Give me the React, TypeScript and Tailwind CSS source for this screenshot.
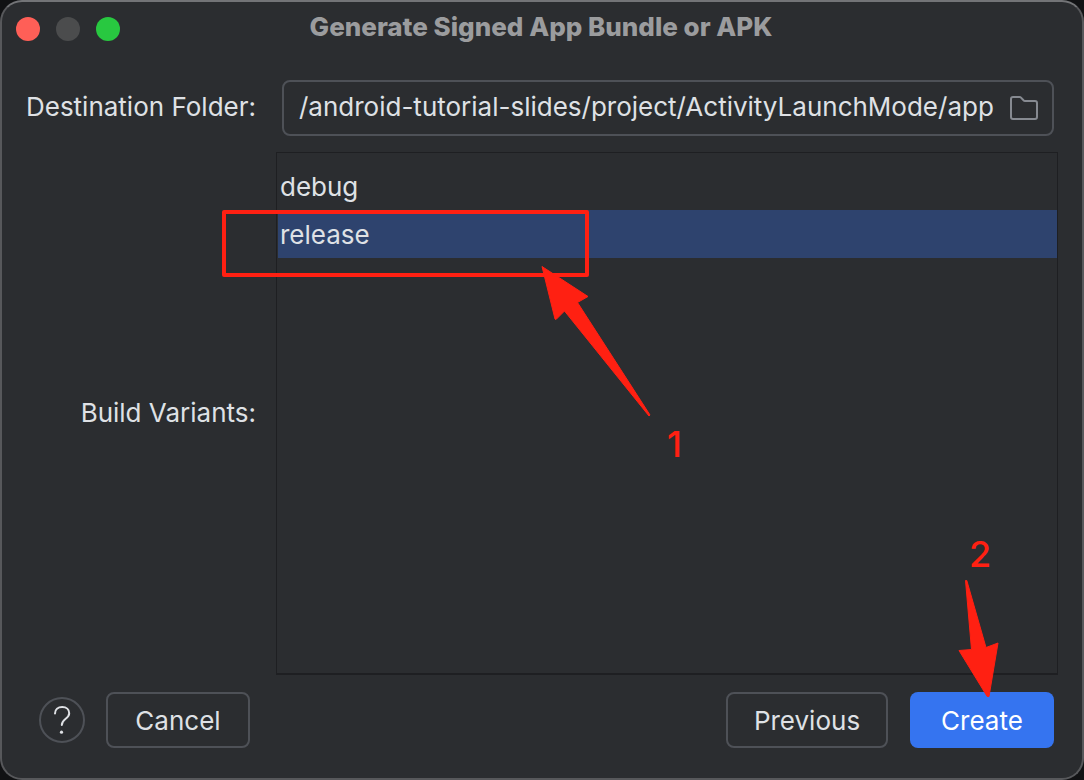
import { useState } from "react";

const VARIANTS = ["debug", "release"];

function TrafficLights() {
  return (
    <div className="flex gap-4">
      <button type="button" aria-label="Close" className="size-6 rounded-full bg-[#ff5f57]" />
      <button type="button" aria-label="Minimize" disabled className="size-6 rounded-full bg-[#4b4c4d]" />
      <button type="button" aria-label="Zoom" className="size-6 rounded-full bg-[#28c840]" />
    </div>
  );
}

function FolderIcon() {
  return (
    <svg width="32" height="32" viewBox="0 0 32 32" fill="none" stroke="#868a91" strokeWidth="2" strokeLinejoin="round">
      <path d="M3 7a2 2 0 0 1 2-2h6.600a2 2 0 0 1 1.400.6L15.500 8.300a2 2 0 0 0 1.500.7H27a2 2 0 0 1 2 2v14a2 2 0 0 1-2 2H5a2 2 0 0 1-2-2z" />
    </svg>
  );
}

function HelpIcon() {
  return (
    <svg width="24" height="32" viewBox="0 0 24 32" fill="none" stroke="#dfe1e5" strokeWidth="2" strokeLinecap="round">
      <path d="M5 9.500C5 5.500 8 3 12.200 3s7 2.600 7 6.200c0 5.800-7.400 5.300-7.400 11.800" />
      <circle cx="11.500" cy="28.200" r="1.600" fill="#dfe1e5" stroke="none" />
    </svg>
  );
}

function SelectArrow() {
  return (
    <svg className="pointer-events-none absolute left-[263px] top-[111px]" width="112" height="154" viewBox="540 264 112 154" fill="#ff2012" stroke="#ff2012" strokeLinejoin="round">
      <path d="M542 266.500L588 296.500L577.500 302.500L650 415L649 416L564.500 311L556 319.500L555 319Z" />
    </svg>
  );
}

function CreateArrow() {
  return (
    <svg className="pointer-events-none absolute -top-[114px] left-[46px]" width="44" height="122" viewBox="956 578 44 122" fill="#ff2012" stroke="#ff2012" strokeLinejoin="round">
      <path d="M965.500 580.500L966.800 580.500L986 647.500L998 643L989 696.500L987.200 696.500L959 650.500L971.500 649.500Z" />
    </svg>
  );
}

export default function App() {
  const [folder, setFolder] = useState("/android-tutorial-slides/project/ActivityLaunchMode/app");
  const [variant, setVariant] = useState(["release"]);

  return (
    <div className="min-h-screen bg-[#111214] flex font-['Inter',sans-serif] text-[26px] leading-8 text-[#dfe1e5]">
      <main className="flex flex-1 flex-col rounded-[22px] border-2 border-[#57585b] border-t-[#737477] bg-[#2b2d30] pb-[30px]">
        <header className="grid grid-cols-[1fr_auto_1fr] items-center pl-3.5 pr-4 pt-[9px]">
          <div className="pt-0.5">
            <TrafficLights />
          </div>
          <h1 className="pb-px font-extrabold text-[#9b9c9e]">Generate Signed App Bundle or APK</h1>
        </header>

        <form className="flex flex-1 flex-col pt-9" onSubmit={(e) => e.preventDefault()}>
          <div className="grid flex-1 grid-cols-[254px_1fr] grid-rows-[auto_1fr] gap-y-4 pr-6">
            <label htmlFor="folder" className="self-center pb-0.5 text-right">
              Destination Folder:
            </label>
            <div className="ml-[26px] mr-1 flex h-14 items-center gap-3 rounded-lg border-2 border-[#4e5157] pl-[15px] pr-3">
              <input
                id="folder"
                className="min-w-0 flex-1 bg-transparent pb-0.5 outline-none"
                value={folder}
                onChange={(e) => setFolder(e.target.value)}
              />
              <button type="button" aria-label="Browse">
                <FolderIcon />
              </button>
            </div>

            <label htmlFor="variants" className="self-center pb-0.5 text-right">
              Build Variants:
            </label>
            <div className="relative ml-5 flex border border-b-2 border-[#1e1f22] pl-px">
              <select
                id="variants"
                multiple
                className="w-full appearance-none overflow-hidden bg-transparent pt-[9px] outline-none"
                value={variant}
                onChange={(e) => setVariant([e.target.value])}
              >
                {VARIANTS.map((name) => (
                  <option
                    key={name}
                    value={name}
                    className="h-12 px-0.5 pb-[7px] pt-[9px] text-[#dfe1e5] checked:bg-[#2e436e] checked:bg-[linear-gradient(#2e436e,#2e436e)] checked:text-[#dfe1e5]"
                  >
                    {name}
                  </option>
                ))}
              </select>
              <div className="pointer-events-none absolute -left-[55px] top-[57px] h-[67px] w-[367px] rounded-xs border-4 border-[#ff2012]" />
              <SelectArrow />
              <span className="pointer-events-none absolute left-[390px] top-[271px] text-4xl font-medium text-[#ff2012]">1</span>
            </div>
          </div>

          <footer className="flex items-center pl-[37px] pr-7 pt-[17px]">
            <button type="button" aria-label="Help" className="flex size-[46px] items-center justify-center rounded-full border-2 border-[#4e5157]">
              <HelpIcon />
            </button>
            <button type="button" className="ml-[21px] h-14 w-36 rounded-lg border-2 border-[#4e5157] pt-0.5">
              Cancel
            </button>
            <button type="button" className="ml-auto h-14 w-[162px] rounded-lg border-2 border-[#4e5157] pt-0.5">
              Previous
            </button>
            <div className="relative ml-[22px]">
              <button type="submit" className="h-14 w-36 rounded-lg bg-[#3574f0] pt-0.5 text-white">
                Create
              </button>
              <span className="pointer-events-none absolute -top-[158px] left-[59px] text-4xl font-medium text-[#ff2012]">2</span>
              <CreateArrow />
            </div>
          </footer>
        </form>
      </main>
    </div>
  );
}
